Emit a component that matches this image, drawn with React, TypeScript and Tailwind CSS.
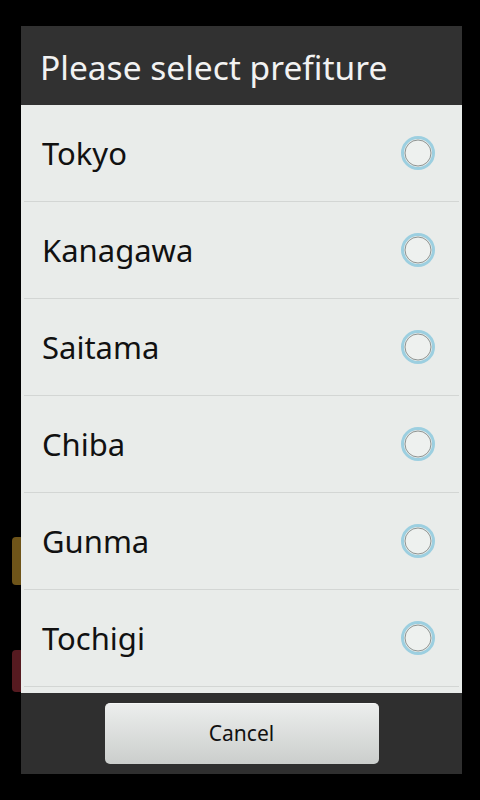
import React from "react";

const prefectures = ["Tokyo", "Kanagawa", "Saitama", "Chiba", "Gunma", "Tochigi"];

const Radio = () => (
  <svg width="36" height="36" viewBox="0 0 36 36">
    <circle cx="18" cy="18" r="15.5" fill="none" stroke="#9ccfe0" strokeWidth="3" />
    <circle cx="18" cy="18" r="13" fill="#eef1ef" stroke="#8e9492" strokeWidth="1" />
  </svg>
);

export default function App() {
  return (
    <div
      className="relative w-[480px] h-[800px] bg-black overflow-hidden"
      style={{ fontFamily: '"Noto Sans", "DejaVu Sans", sans-serif' }}
    >
      {/* dimmed bits of the screen behind the dialog */}
      <div className="absolute left-[12px] top-[537px] w-[12px] h-[48px] rounded-[4px] bg-[#6e5419]" />
      <div className="absolute left-[12px] top-[650px] w-[12px] h-[42px] rounded-[4px] bg-[#561a20]" />

      <div className="relative ml-[21px] pt-[26px] w-[441px]">
        <div className="h-[79px] bg-[#313131] flex items-center pl-[19px] pt-[4px]">
          <span className="text-[33.5px] leading-none text-[#f2f2f2] whitespace-nowrap">Please select prefiture</span>
        </div>

        <div className="h-[588px] bg-[#e9ecea] overflow-hidden">
          {prefectures.map((name) => (
            <div key={name} className="h-[97px] mx-[3px] flex flex-col">
              <div className="flex-1 flex items-center justify-between pl-[18px] pr-[23px]">
                <span className="text-[31px] leading-none text-[#111111]">{name}</span>
                <Radio />
              </div>
              <div className="h-px bg-[#d3d6d4]" />
            </div>
          ))}
        </div>

        <div className="h-[81px] bg-[#2f2f2f] flex items-center justify-center">
          <div className="w-[274px] h-[61px] rounded-[5px] bg-gradient-to-b from-[#eceeed] to-[#cbcecc] border-t border-[#f6f7f6] flex items-center justify-center pb-[2px]">
            <span className="text-[21px] text-[#111111] leading-none">Cancel</span>
          </div>
        </div>
      </div>
    </div>
  );
}
